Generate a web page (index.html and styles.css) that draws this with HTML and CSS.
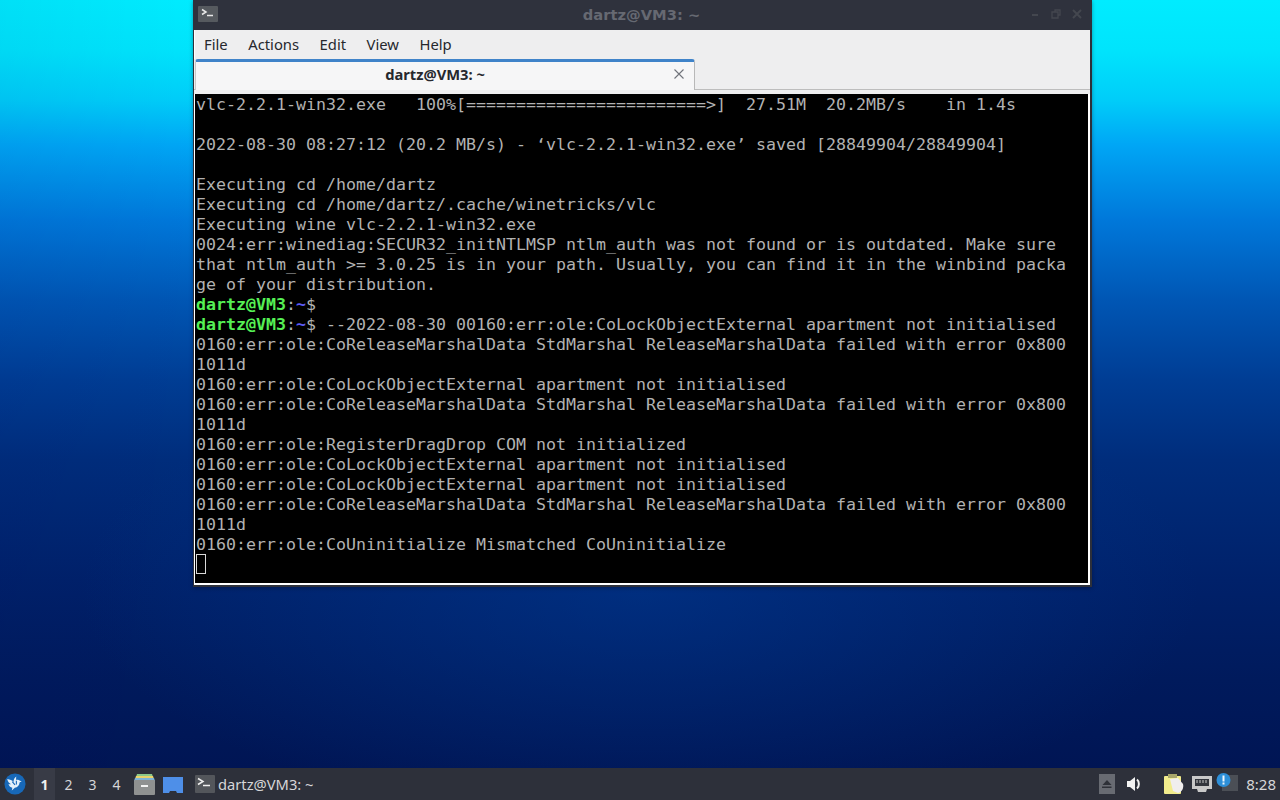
FILE: index.html
```html
<!DOCTYPE html>
<html lang="en">
<head>
<meta charset="utf-8">
<title>dartz@VM3: ~</title>
<link rel="stylesheet" href="styles.css">
</head>
<body>
<div class="desktop">
  <div class="wallpaper-area">
    <section class="window">
      <header class="titlebar">
        <svg class="title-icon" width="20" height="16" viewBox="0 0 20 16"><rect width="20" height="16" rx="1" fill="#565a5f"/><path d="M4 3.500l4 2.500-4 2.500" fill="none" stroke="#e8e8e8" stroke-width="1.500"/><path d="M9 9.500h6" stroke="#e8e8e8" stroke-width="1.500"/></svg>
        <span class="title-text">dartz@VM3: ~</span>
        <div class="title-buttons">
          <svg width="12" height="12" viewBox="0 0 12 12"><path d="M3 7h6" stroke="#44474f" stroke-width="2"/></svg>
          <svg width="12" height="12" viewBox="0 0 12 12"><path d="M2 4h6v6H2zM5 4V2h5v5H8" fill="none" stroke="#44474f" stroke-width="1.300"/></svg>
          <svg width="12" height="12" viewBox="0 0 12 12"><path d="M2 2l8 8M10 2l-8 8" stroke="#44474f" stroke-width="2"/></svg>
        </div>
      </header>
      <nav class="menubar">
        <span class="menu-item">File</span>
        <span class="menu-item">Actions</span>
        <span class="menu-item">Edit</span>
        <span class="menu-item">View</span>
        <span class="menu-item">Help</span>
      </nav>
      <div class="tabbar">
        <div class="tab">
          <span class="tab-title">dartz@VM3: ~</span>
          <svg class="tab-close" width="10" height="10" viewBox="0 0 10 10"><path d="M.5.5l9 9M9.500.5l-9 9" stroke="#70737a" stroke-width="1.100"/></svg>
        </div>
      </div>
      <pre class="terminal">vlc-2.2.1-win32.exe   100%[========================&gt;]  27.51M  20.2MB/s    in 1.4s

2022-08-30 08:27:12 (20.2 MB/s) - ‘vlc-2.2.1-win32.exe’ saved [28849904/28849904]

Executing cd /home/dartz
Executing cd /home/dartz/.cache/winetricks/vlc
Executing wine vlc-2.2.1-win32.exe
0024:err:winediag:SECUR32_initNTLMSP ntlm_auth was not found or is outdated. Make sure
that ntlm_auth &gt;= 3.0.25 is in your path. Usually, you can find it in the winbind packa
ge of your distribution.
<b class="user">dartz@VM3</b>:<b class="path">~</b>$
<b class="user">dartz@VM3</b>:<b class="path">~</b>$ --2022-08-30 00160:err:ole:CoLockObjectExternal apartment not initialised
0160:err:ole:CoReleaseMarshalData StdMarshal ReleaseMarshalData failed with error 0x800
1011d
0160:err:ole:CoLockObjectExternal apartment not initialised
0160:err:ole:CoReleaseMarshalData StdMarshal ReleaseMarshalData failed with error 0x800
1011d
0160:err:ole:RegisterDragDrop COM not initialized
0160:err:ole:CoLockObjectExternal apartment not initialised
0160:err:ole:CoLockObjectExternal apartment not initialised
0160:err:ole:CoReleaseMarshalData StdMarshal ReleaseMarshalData failed with error 0x800
1011d
0160:err:ole:CoUninitialize Mismatched CoUninitialize
<span class="cursor"></span></pre>
    </section>
  </div>
  <footer class="panel">
    <svg class="logo" width="22" height="22" viewBox="0 0 24 24"><circle cx="12" cy="12" r="11.500" fill="#1768b8"/><path d="M3.500 6.500c3 .4 5.400 1.500 7 3.200-.1-2.500.9-4.700 3-6-.5 1.600-.4 3 .2 4.200 1-.7 2.400-.5 3.300.4l2.300.9-2.200.9c-.2 3.200-2.300 5.500-5.300 6.100l-3.300 3 .6-3c-2.200-.6-3.700-2.200-4.200-4.300 1 .4 2 .5 2.800.3-2.200-1.100-3.600-3-4.200-5.700z" fill="#e3f0fa"/><path d="M9 9.500l3 3.500M13.500 8.500v4" stroke="#1768b8" stroke-width="1.200" fill="none"/></svg>
    <div class="pager">
      <span class="desk desk-active">1</span>
      <span class="desk">2</span>
      <span class="desk">3</span>
      <span class="desk">4</span>
    </div>
    <svg class="launcher" width="21" height="22" viewBox="0 0 21 22"><path d="M3 1h15l1 3H2z" fill="#8bc98a"/><path d="M2 3h17l1 3H1z" fill="#e9d46b"/><path d="M1 5h19l1 3H0z" fill="#7fb4d8"/><rect y="7" width="21" height="15" rx="1" fill="#8f9191"/><rect x="7" y="12" width="7" height="2" fill="#f2f2f2"/></svg>
    <svg class="launcher launcher-folder" width="20" height="17" viewBox="0 0 20 17"><path d="M0 1h20v16h-6l-1-2H7l-1 2H0z" fill="#4e8fe8"/></svg>
    <div class="task">
      <svg width="20" height="18" viewBox="0 0 20 18"><rect width="20" height="18" rx="1" fill="#53565b"/><path d="M3 3.500l5 3-5 3" fill="none" stroke="#f0f0f0" stroke-width="1.500"/><path d="M8 10.500h7" stroke="#f0f0f0" stroke-width="1.500"/></svg>
      <span class="task-label">dartz@VM3: ~</span>
    </div>
    <div class="tray">
      <svg class="tray-eject" width="16" height="20" viewBox="0 0 16 20"><rect width="16" height="20" fill="#686b72"/><path d="M8 6l4.500 5h-9z" fill="#2e3138"/><rect x="3" y="12.500" width="9.500" height="1.500" fill="#2e3138"/></svg>
      <svg class="tray-sound" width="16" height="16" viewBox="0 0 16 16"><path d="M0 5h3l5-4v14l-5-4H0z" fill="#f2f2f2"/><path d="M10 3.500c2.500 2 2.500 7 0 9" fill="none" stroke="#f2f2f2" stroke-width="2"/></svg>
      <svg class="tray-clip" width="20" height="22" viewBox="0 0 20 22"><rect y="3" width="17" height="18" rx="1" fill="#f2ec8c"/><rect x="4" y="1" width="9" height="4" fill="#a8a66a"/><path d="M6 6l8-1 5 6c1 4-1 8-5 9l-5-2z" fill="#f0eeee"/></svg>
      <svg class="tray-net" width="20" height="18" viewBox="0 0 20 18"><path d="M0 1h20v13h-5l-1 3H6l-1-3H0z" fill="#c9c9c9"/><rect x="3" y="4" width="14" height="7" fill="#33363d"/><path d="M5 5v3M8 5v3M11 5v3M14 5v3" stroke="#c9c9c9"/></svg>
      <span class="tray-note">
        <svg width="22" height="20" viewBox="0 0 22 20"><rect x="6" y="3" width="16" height="16" fill="#4b4f56"/><circle cx="7.500" cy="8" r="7" fill="#2d8fd8"/><rect x="6.500" y="3.500" width="2" height="6" fill="#eef6fc"/><rect x="6.500" y="10.500" width="2" height="2" fill="#eef6fc"/></svg>
      </span>
      <span class="clock">8:28</span>
    </div>
  </footer>
</div>
</body>
</html>
```
FILE: styles.css
```css
* { box-sizing: border-box; }

html, body {
  margin: 0;
  height: 100%;
  overflow: hidden;
}

.desktop {
  width: 1280px;
  height: 800px;
  display: flex;
  flex-direction: column;
  background:
    radial-gradient(ellipse 560px 230px at 640px 590px, rgba(0, 60, 150, .5), rgba(0, 60, 150, 0)),
    linear-gradient(90deg, rgba(0, 0, 90, .05), rgba(0, 0, 90, 0) 200px),
    linear-gradient(180deg, #00ecff 0, #00e4fc 50px, #00cdf9 100px, #00a6f5 145px, #0078da 220px, #0056b4 300px, #003d94 380px, #002d7c 460px, #00216a 580px, #001a5c 680px, #001554 768px);
  font-family: "Noto Sans", sans-serif;
}

.wallpaper-area {
  position: relative;
  flex: 1;
}

.window {
  position: absolute;
  left: 193px;
  top: 0;
  width: 899px;
  height: 587px;
  display: flex;
  flex-direction: column;
  background: #eeeeef;
  border: 1px solid #2d303a;
  border-width: 0 2px 2px 1px;
  box-shadow: 0 1px 4px rgba(0, 0, 20, .35);
}

.titlebar {
  height: 30px;
  flex: none;
  display: flex;
  align-items: center;
  margin: 0 -2px 0 -1px;
  padding: 0 9px 2px 5px;
  background: #2f323d;
}

.title-icon { flex: none; }

.title-text {
  flex: 1;
  text-align: center;
  padding-left: 36px;
  font-family: "DejaVu Sans", sans-serif;
  font-size: 14.700px;
  font-weight: 700;
  color: #666972;
}

.title-buttons {
  display: flex;
  gap: 9px;
}

.menubar {
  height: 29px;
  flex: none;
  display: flex;
  align-items: center;
  gap: 20.500px;
  padding: 0 0 2px 9px;
  font-size: 14.800px;
  color: #26282d;
  border-left: 1px solid #fff;
}

.tabbar {
  height: 31px;
  flex: none;
  padding-left: 1px;
  border-bottom: 1px solid #bdbdbd;
}

.tab {
  width: 500px;
  height: 31px;
  display: flex;
  align-items: center;
  padding-bottom: 5px;
  background: #f6f6f7;
  border-top: 3px solid #3f83c9;
  border-right: 1px solid #b8b8b8;
  border-left: 1px solid #c8c8c8;
  border-radius: 3px 3px 0 0;
}

.tab-title {
  flex: 1;
  text-align: center;
  font-size: 14.700px;
  font-weight: 700;
  color: #26282d;
}

.tab-close {
  margin-right: 10px;
}

.terminal {
  flex: 1;
  margin: 4px 0 0;
  padding: 1px 0 0 1px;
  background: #000;
  border: solid #fff;
  border-width: 0 2px 2px 1px;
  font-family: "DejaVu Sans Mono", monospace;
  font-size: 16.610px;
  line-height: 20px;
  color: #b2b2b2;
  overflow: hidden;
}

.user { color: #55f055; }
.path { color: #5c5cf5; }

.cursor {
  display: inline-block;
  width: 10px;
  height: 20px;
  margin-top: -1px;
  vertical-align: top;
  border: 1px solid #d8d8d8;
}

.panel {
  height: 32px;
  flex: none;
  display: flex;
  align-items: center;
  padding-left: 4px;
  background: #2d303a;
  color: #d6d6d8;
  font-size: 14px;
}

.logo { flex: none; }

.pager {
  display: flex;
  margin-left: 8px;
  gap: 3px;
}

.desk {
  width: 21px;
  height: 32px;
  display: flex;
  align-items: center;
  justify-content: center;
}

.desk-active {
  background: #383b46;
  color: #f0f0f0;
  font-weight: 700;
}

.launcher { margin-left: 7px; flex: none; }
.launcher-folder { margin-left: 8px; }

.task {
  display: flex;
  align-items: center;
  gap: 3px;
  margin-left: 12px;
  font-size: 14.700px;
}

.tray {
  margin-left: auto;
  display: flex;
  align-items: center;
  padding-right: 4px;
}

.tray-sound { margin-left: 12px; }
.tray-clip { margin-left: 21px; }
.tray-net { margin-left: 8px; }

.tray-note {
  display: flex;
  margin-left: 4px;
  margin-top: -4px;
}

.clock {
  margin-left: 8px;
  font-size: 15px;
}
```
